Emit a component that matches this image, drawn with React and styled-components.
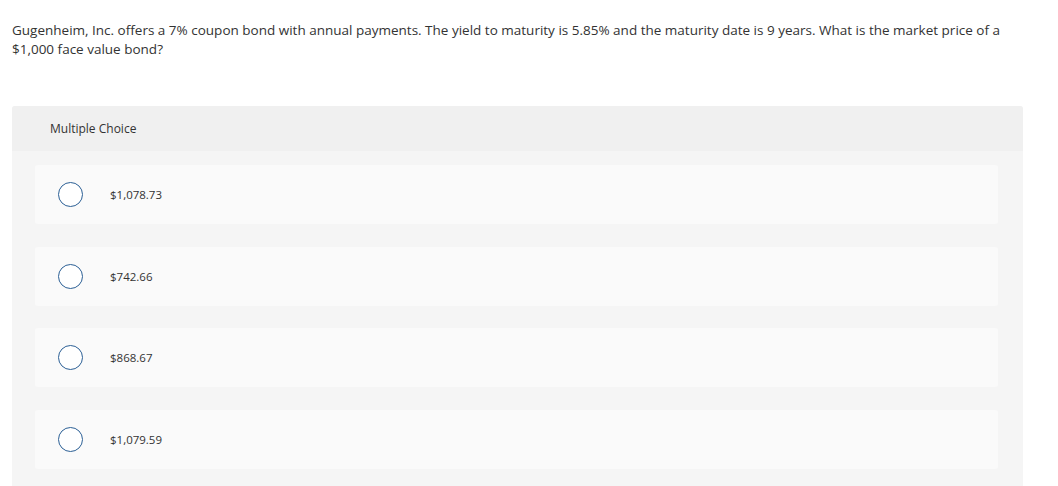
import React from "react";
import styled, { createGlobalStyle } from "styled-components";

const Global = createGlobalStyle`
  html, body { margin: 0; padding: 0; background: #fff; }
  body { font-family: "Open Sans", "Liberation Sans", sans-serif; color: #333; }
`;

const Page = styled.div`
  padding: 21px 35px 0 12px;
`;

const Question = styled.p`
  margin: 0;
  font-size: 13.5px;
  line-height: 19px;
  color: #333;
`;

const Panel = styled.section`
  margin-top: 47px;
  border-radius: 3px 3px 0 0;
  background: #f5f5f5;
  overflow: hidden;
`;

const Header = styled.div`
  height: 45px;
  display: flex;
  align-items: center;
  padding-left: 38px;
  background: #f0f0f0;
  font-size: 12px;
  color: #333;
`;

const List = styled.div`
  display: flex;
  flex-direction: column;
  gap: 22.6px;
  padding: 14px 25px 20px 23px;
`;

const Option = styled.label`
  height: 59px;
  display: flex;
  align-items: center;
  gap: 27px;
  padding-left: 23px;
  background: #fafafa;
  border-radius: 3px;
  font-size: 11.5px;
  color: #333;
  cursor: pointer;
`;

const Radio = styled.span`
  box-sizing: border-box;
  width: 25px;
  height: 25px;
  border-radius: 50%;
  border: 1.5px solid #2b5f95;
  background: #fff;
  flex: none;
`;

const options = ["$1,078.73", "$742.66", "$868.67", "$1,079.59"];

export default function App() {
  return (
    <>
      <Global />
      <Page>
        <Question>
          Gugenheim, Inc. offers a 7% coupon bond with annual payments. The yield to maturity is 5.85% and the maturity date is 9 years. What is the market price of a $1,000 face value bond?
        </Question>
        <Panel>
          <Header>Multiple Choice</Header>
          <List>
            {options.map((o) => (
              <Option key={o}>
                <Radio />
                {o}
              </Option>
            ))}
          </List>
        </Panel>
      </Page>
    </>
  );
}
